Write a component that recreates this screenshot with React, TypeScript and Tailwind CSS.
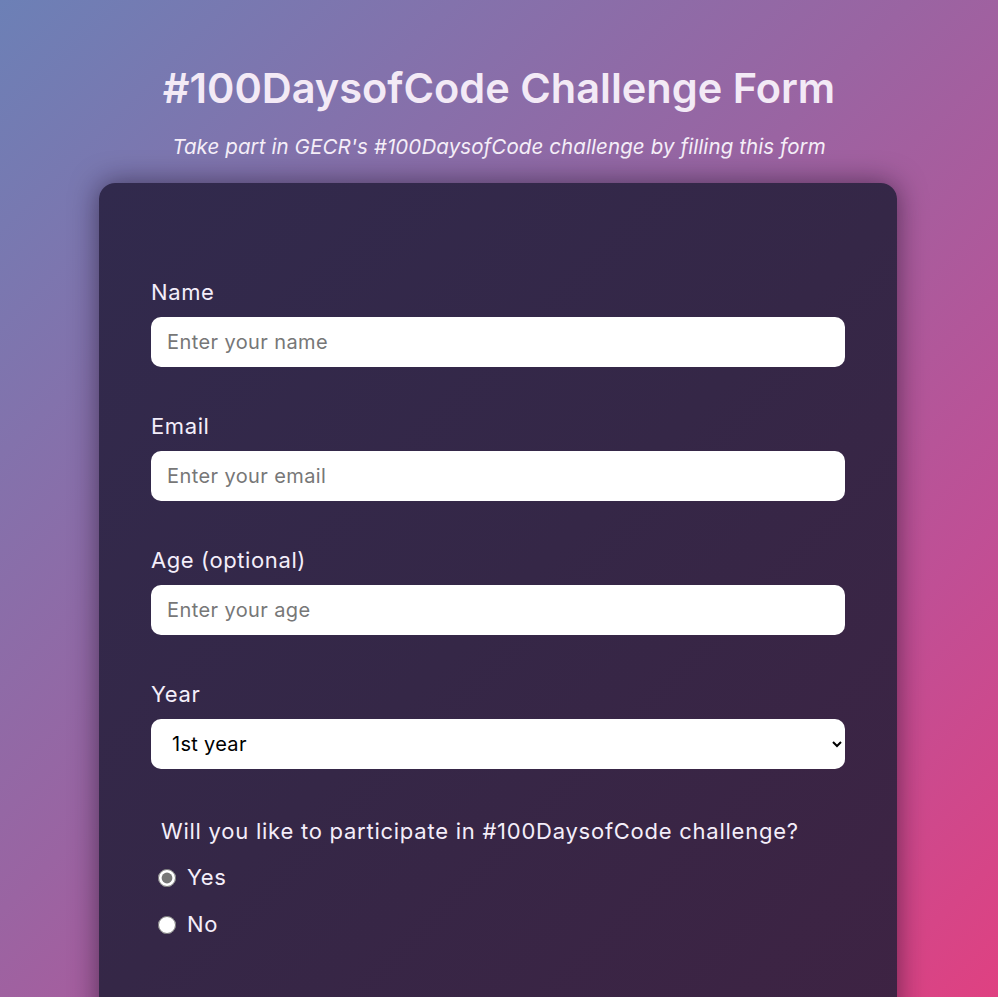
import { useState } from 'react';

const font = { fontFamily: 'Inter, "Noto Sans", sans-serif' };

interface FieldProps {
  label: string;
  placeholder: string;
  type?: string;
}

function Field({ label, placeholder, type = 'text' }: FieldProps) {
  return (
    <div className="flex flex-col">
      <label className="text-[22px] leading-[30px] tracking-[0.6px] text-[#f4eefa] mb-[10px]">{label}</label>
      <input
        type={type}
        placeholder={placeholder}
        className="h-[50px] w-full rounded-[10px] bg-white px-[16px] text-[20px] tracking-[0.4px] text-black placeholder:text-[#777] outline-none"
      />
    </div>
  );
}

/** #100DaysofCode 참가 신청 폼 */
export default function App() {
  const [join, setJoin] = useState('yes');

  return (
    <main
      style={font}
      className="min-h-[997px] w-full bg-[linear-gradient(135deg,#6c80b6_0%,#9a64a2_45%,#c04f95_75%,#e14080_100%)] flex flex-col items-center pt-[62px]"
    >
      <h1 className="text-[41.5px] leading-[52px] font-semibold text-[#f3eaf6]">
        #100DaysofCode Challenge Form
      </h1>
      <p className="mt-[18px] text-[20.5px] leading-[30px] tracking-[0.1px] italic text-[#f5eef8]">
        Take part in GECR&apos;s #100DaysofCode challenge by filling this form
      </p>

      <form className="mt-[21px] -ml-[2px] w-[798px] rounded-[16px] bg-[linear-gradient(135deg,#312a4d_0%,#352747_50%,#3e2343_100%)] shadow-[0_0_28px_rgba(20,10,30,0.55)] px-[52px] pt-[94px] pb-[80px] flex flex-col gap-[44px]">
        <Field label="Name" placeholder="Enter your name" />
        <Field label="Email" placeholder="Enter your email" type="email" />
        <Field label="Age (optional)" placeholder="Enter your age" type="number" />

        <div className="flex flex-col">
          <label className="text-[22px] leading-[30px] tracking-[0.6px] text-[#f4eefa] mb-[10px]">Year</label>
          <select className="h-[50px] w-full rounded-[10px] bg-white px-[17px] text-[20px] tracking-[0.3px] text-black outline-none">
            <option>1st year</option>
            <option>2nd year</option>
            <option>3rd year</option>
            <option>4th year</option>
          </select>
        </div>

        <fieldset className="flex flex-col px-[10px] mt-[3px]">
          <p className="text-[22px] leading-[30px] tracking-[0.75px] text-[#f4eefa] mb-[8px]">
            Will you like to participate in #100DaysofCode challenge?
          </p>
          {['Yes', 'No'].map((opt) => (
            <label key={opt} className="flex items-center gap-[11px] -ml-[3px] h-[47px] text-[22px] tracking-[0.6px] text-[#f4eefa]">
              <input
                type="radio"
                name="join"
                checked={join === opt.toLowerCase()}
                onChange={() => setJoin(opt.toLowerCase())}
                className="size-[18px] m-0 accent-[#777]"
              />
              {opt}
            </label>
          ))}
        </fieldset>
      </form>
    </main>
  );
}
